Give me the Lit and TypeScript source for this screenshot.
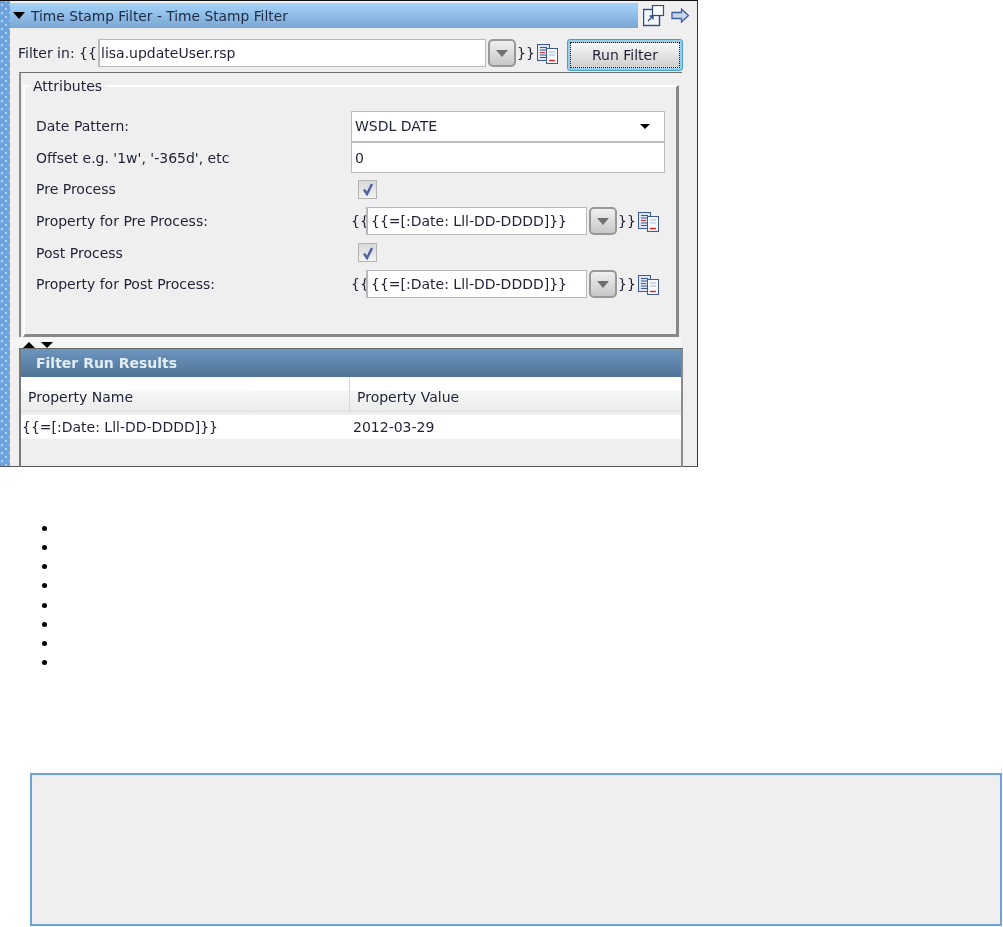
import { LitElement, html, css, svg } from "lit";
import { customElement } from "lit/decorators.js";

const docIcon = svg`<svg class="doc" width="22" height="20" viewBox="0 0 22 20">
  <rect x="0.5" y="0.5" width="12" height="16" fill="#dfe6f2" stroke="#3d5c94"/>
  <path d="M3 3.5h7M3 6h7" stroke="#3d5c94"/><path d="M3 8.5h5" stroke="#d8322a"/><path d="M3 11h7M3 13.5h7" stroke="#3d5c94"/>
  <rect x="9.5" y="4.5" width="11" height="15" fill="#f6f8fb" stroke="#3d5c94"/>
  <path d="M12 8h6M12 11h6" stroke="#a9b9d2"/><path d="M12 16.5h6" stroke="#e8201c" stroke-width="1.4"/>
</svg>`;

@customElement("app-root")
export class AppRoot extends LitElement {
  static styles = css`
    :host { display: block; width: 1003px; height: 927px; background: #fff; font-family: "DejaVu Sans", "Noto Sans", sans-serif; color: #1f2235; overflow: hidden; }
    * { box-sizing: border-box; }
    .shot { display: flex; width: 698px; height: 467px; border-top: 1px solid #111; border-bottom: 1px solid #555; filter: blur(0.3px); }
    .strip { flex: none; width: 10px; background-color: #6ea2dc; background-image: radial-gradient(circle, #b4d0ee 1px, transparent 1.2px), radial-gradient(circle, #b4d0ee 1px, transparent 1.2px); background-size: 8px 8px; background-position: -2px 0, 2px 4px; }
    .main { flex: 1; min-width: 0; background: #efefef; border-right: 1px solid #333; font-size: 14px; }
    .titlerow { display: flex; align-items: center; height: 27px; margin-top: 1px; }
    .title { flex: none; width: 628px; height: 25px; display: flex; align-items: center; gap: 6px; padding-left: 3px; background: linear-gradient(#a4d3fa, #79a7d3); color: #1f2a44; font-size: 13.8px; }
    .tri { width: 0; height: 0; border-left: 6px solid transparent; border-right: 6px solid transparent; border-top: 7px solid #000; }
    .winicons { display: flex; align-items: center; gap: 6px; margin-left: 5px; }
    .filterrow { display: flex; align-items: flex-start; height: 32px; margin-top: 10px; padding-left: 8px; }
    .flabel { flex: none; width: 80px; line-height: 28px; white-space: nowrap; }
    .input { flex: none; background: #fff; border: 1px solid #b9b9b9; border-left-width: 2px; display: flex; align-items: center; padding-left: 1px; height: 28px; white-space: nowrap; overflow: hidden; }
    .fin { width: 388px; }
    .pin { width: 221px; padding-left: 3px; }
    .combo { flex: none; width: 28px; height: 28px; margin-left: 2px; border: 2px solid #989898; border-radius: 5px; background: linear-gradient(#f0f0f0, #c8c8c8); display: flex; align-items: center; justify-content: center; }
    .combo i { width: 0; height: 0; border-left: 6px solid transparent; border-right: 6px solid transparent; border-top: 7px solid #707070; }
    .open { flex: none; width: 15px; white-space: nowrap; }
    .close { flex: none; width: 21px; padding-left: 1px; line-height: 28px; white-space: nowrap; }
    .doc { display: block; flex: none; margin-top: 5px; }
    .run { flex: none; width: 116px; height: 32px; margin-left: 8px; padding: 2px; border: 1px solid #4d9ccc; border-radius: 3px; background: #8fd0ee; font: inherit; color: inherit; }
    .run span { display: flex; width: 100%; height: 100%; align-items: center; justify-content: center; border: 1px dotted #111; background: linear-gradient(#f8f8f8, #cfcfcf); }
    .frame { margin: 1px 15px 0 9px; height: 265px; border-top: 1px solid #6f6f6f; border-left: 2px solid #8c8c8c; padding: 4px 3px 0 2px; }
    fieldset { margin: 0; padding: 0 0 0 11px; height: 100%; border: 2px solid #fff; border-right: 3px solid #878787; border-bottom: 3px solid #878787; min-width: 0; }
    legend { padding: 0 3px; margin-left: -6px; line-height: 18px; }
    .grid { display: grid; grid-template-columns: 315px 1fr; grid-auto-rows: 31.6px; align-items: center; margin-top: 15.5px; }
    .box { height: 31px; width: 314px; border: 1px solid #bdbdbd; background: #fff; display: flex; align-items: center; padding-left: 3px; justify-content: space-between; padding-right: 14px; }
    .caret { width: 0; height: 0; border-left: 5px solid transparent; border-right: 5px solid transparent; border-top: 5px solid #000; }
    .check { width: 19px; height: 19px; margin-left: 7px; border: 1px solid #b4b4b4; background: linear-gradient(#d8d8d8, #f2f2f2); display: flex; align-items: center; justify-content: center; }
    .prop { display: flex; align-items: center; }
    .prop .doc { margin: 1px 0 0 0; }
    .split { display: flex; gap: 6px; height: 11px; align-items: flex-end; padding: 0 0 0 13px; margin-right: 15px; background: #f5f5f5; }
    .up { width: 0; height: 0; border-left: 6px solid transparent; border-right: 6px solid transparent; border-bottom: 6px solid #000; }
    .down { width: 0; height: 0; border-left: 6px solid transparent; border-right: 6px solid transparent; border-top: 6px solid #000; }
    .results { margin: 0 14px 0 9px; height: 119px; border-top: 1px solid #666; border-left: 2px solid #777; border-right: 2px solid #8a8a8a; }
    .rhead { height: 28px; background: linear-gradient(#6d96bf, #4f7394); color: #e3edf6; font-weight: bold; font-size: 14px; display: flex; align-items: center; padding-left: 15px; }
    .thead { display: grid; grid-template-columns: 328px 1fr; height: 35px; background: linear-gradient(#fff 36%, #f5f6f6 40%, #ececec 95%, #dcdcdc); }
    .thead div { display: flex; align-items: center; padding: 4px 0 0 7px; }
    .thead div + div { border-left: 1px solid #d8d8d8; }
    .trow { display: grid; grid-template-columns: 328px 1fr; height: 24px; margin-top: 3px; background: #fff; align-items: center; }
    .trow div { padding-left: 1px; }
    .trow div + div { padding-left: 4px; }
    .bullets { list-style: none; margin: 52px 0 0 0; padding: 0 0 0 42px; }
    .bullets li { height: 19.14px; display: flex; align-items: center; }
    .bullets li::before { content: ""; width: 5px; height: 5px; border-radius: 50%; background: #000; }
    .code { margin: 101px 0 0 30px; width: 972px; height: 153px; background: #efefef; border: 2px solid #6ea3d8; }
  `;

  private prop() {
    return html`<div class="prop"><span class="open">{{</span><div class="input pin">{{=[:Date: Lll-DD-DDDD]}}</div><div class="combo"><i></i></div><span class="close">}}</span>${docIcon}</div>`;
  }

  private check() {
    return html`<div class="check"><svg width="14" height="14" viewBox="0 0 14 14"><path d="M3 7.5l3 4.5 5-10" fill="none" stroke="#4a5fa8" stroke-width="2.4"/></svg></div>`;
  }

  render() {
    return html`
      <div class="shot">
        <div class="strip"></div>
        <div class="main">
          <div class="titlerow">
            <div class="title"><span class="tri"></span><span>Time Stamp Filter - Time Stamp Filter</span></div>
            <div class="winicons">
              <svg width="22" height="22" viewBox="0 0 22 22"><rect x="0.5" y="4.5" width="16" height="16" fill="#f4f6fa" stroke="#2e4a86" stroke-width="1.4"/><rect x="9.5" y="0.5" width="11" height="10" fill="#fff" stroke="#2e4a86" stroke-width="1.2"/><path d="M5 16l5-5M6.5 11h3.5v3.5" fill="none" stroke="#2e4a86" stroke-width="1.3"/></svg>
              <svg width="19" height="15" viewBox="0 0 19 15"><path d="M1 4.5h9.5V1l7 6.5-7 6.5v-3.5H1z" fill="#c9d6ea" stroke="#3f5f98" stroke-width="1.3"/></svg>
            </div>
          </div>
          <div class="filterrow">
            <span class="flabel">Filter in: {{</span>
            <div class="input fin">lisa.updateUser.rsp</div>
            <div class="combo"><i></i></div>
            <span class="close">}}</span>
            ${docIcon}
            <button class="run"><span>Run Filter</span></button>
          </div>
          <div class="frame">
            <fieldset>
              <legend>Attributes</legend>
              <div class="grid">
                <div>Date Pattern:</div><div class="box">WSDL DATE<span class="caret"></span></div>
                <div>Offset e.g. '1w', '-365d', etc</div><div class="box">0</div>
                <div>Pre Process</div>${this.check()}
                <div>Property for Pre Process:</div>${this.prop()}
                <div>Post Process</div>${this.check()}
                <div>Property for Post Process:</div>${this.prop()}
              </div>
            </fieldset>
          </div>
          <div class="split"><span class="up"></span><span class="down"></span></div>
          <div class="results">
            <div class="rhead">Filter Run Results</div>
            <div class="thead"><div>Property Name</div><div>Property Value</div></div>
            <div class="trow"><div>{{=[:Date: Lll-DD-DDDD]}}</div><div>2012-03-29</div></div>
          </div>
        </div>
      </div>
      <ul class="bullets"><li></li><li></li><li></li><li></li><li></li><li></li><li></li><li></li></ul>
      <div class="code"></div>
    `;
  }
}
